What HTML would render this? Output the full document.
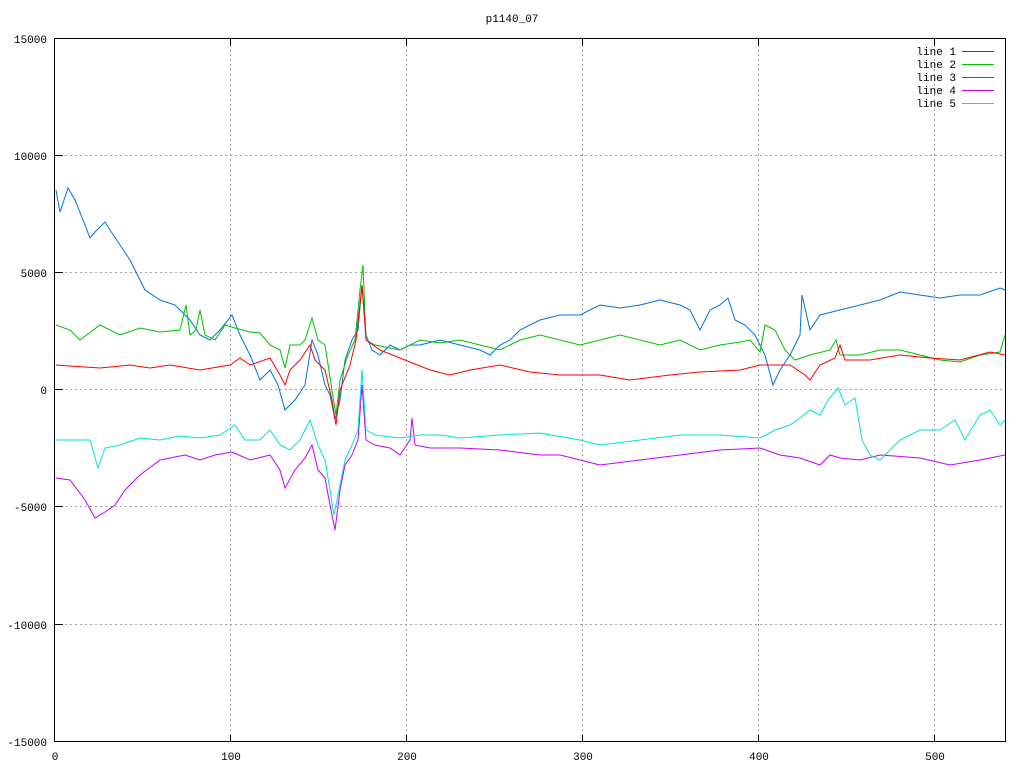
<!DOCTYPE html>
<html><head><meta charset="utf-8"><style>html,body{margin:0;padding:0;background:#fff}svg{display:block}</style></head><body>
<svg width="1024" height="768" xmlns="http://www.w3.org/2000/svg" font-family="Liberation Mono, monospace" font-size="11">
<rect width="1024" height="768" fill="#fff"/>
<g stroke="#a0a0a0" stroke-dasharray="2,3" stroke-width="1">
<line x1="55" y1="155.5" x2="1006" y2="155.5"/><line x1="55" y1="272.5" x2="1006" y2="272.5"/><line x1="55" y1="389.5" x2="1006" y2="389.5"/><line x1="55" y1="506.5" x2="1006" y2="506.5"/><line x1="55" y1="624.5" x2="1006" y2="624.5"/>
<line x1="230.5" y1="39" x2="230.5" y2="742"/><line x1="406.5" y1="39" x2="406.5" y2="742"/><line x1="582.5" y1="39" x2="582.5" y2="742"/><line x1="758.5" y1="39" x2="758.5" y2="742"/><line x1="934.5" y1="39" x2="934.5" y2="742"/>
</g>
<rect x="54.5" y="38.5" width="951" height="703" fill="none" stroke="#000"/>
<g stroke="#000">
<line x1="55" y1="155.5" x2="63" y2="155.5"/><line x1="55" y1="272.5" x2="63" y2="272.5"/><line x1="55" y1="389.5" x2="63" y2="389.5"/><line x1="55" y1="506.5" x2="63" y2="506.5"/><line x1="55" y1="624.5" x2="63" y2="624.5"/>
<line x1="230.5" y1="39" x2="230.5" y2="46"/><line x1="406.5" y1="39" x2="406.5" y2="46"/><line x1="582.5" y1="39" x2="582.5" y2="46"/><line x1="758.5" y1="39" x2="758.5" y2="46"/><line x1="934.5" y1="39" x2="934.5" y2="46"/>
<line x1="230.5" y1="742" x2="230.5" y2="735"/><line x1="406.5" y1="742" x2="406.5" y2="735"/><line x1="582.5" y1="742" x2="582.5" y2="735"/><line x1="758.5" y1="742" x2="758.5" y2="735"/><line x1="934.5" y1="742" x2="934.5" y2="735"/>
</g>
<g fill="#000" text-anchor="end">
<text x="47" y="43">15000</text><text x="47" y="160">10000</text><text x="47" y="277">5000</text><text x="47" y="394">0</text><text x="47" y="511">-5000</text><text x="47" y="629">-10000</text><text x="47" y="746">-15000</text>
</g>
<g fill="#000" text-anchor="middle">
<text x="55" y="760">0</text><text x="231" y="760">100</text><text x="407" y="760">200</text><text x="583" y="760">300</text><text x="759" y="760">400</text><text x="935" y="760">500</text>
<text x="512" y="22">p1140_07</text>
</g>
<g fill="none" stroke-width="1">
<polyline stroke="#0070e0" points="56,190 60,212 68,188 75,200 85,225 90,238 95,232 105,222 110,230 120,245 130,260 145,290 160,300 175,305 190,320 200,335 210,340 220,330 232,315 240,335 250,355 260,380 270,370 278,385 285,410 295,400 305,385 312,340 318,355 325,385 330,395 335,420 340,400 345,360 352,340 358,330 362,285 366,335 372,350 380,355 390,345 400,350 410,345 420,345 440,340 460,345 480,350 490,355 500,345 510,340 520,330 540,320 560,315 580,315 600,305 620,308 640,305 660,300 680,305 690,310 700,330 710,310 720,305 728,298 735,320 745,325 755,335 765,355 773,385 780,370 790,355 800,335 802,295 810,330 820,315 840,310 860,305 880,300 900,292 920,295 940,298 960,295 980,295 1000,288 1005,290"/>
<polyline stroke="#00c000" points="56,325 70,330 80,340 100,325 120,335 140,328 160,332 180,330 186,305 190,335 196,330 200,310 205,335 215,340 225,325 235,328 250,332 260,333 270,345 280,350 285,368 290,345 300,345 305,340 312,318 318,340 325,345 332,390 336,415 340,380 348,355 355,340 360,290 363,265 366,340 375,345 390,348 400,350 420,340 440,343 460,340 480,345 500,350 510,345 520,340 540,335 560,340 580,345 600,340 620,335 640,340 660,345 680,340 700,350 720,345 740,342 750,340 760,352 765,325 775,330 785,350 795,360 810,355 830,350 836,340 840,355 860,355 880,350 900,350 920,355 940,360 960,362 980,355 1000,352 1005,335"/>
<polyline stroke="#ff0000" points="56,365 70,366 100,368 130,365 150,368 170,365 200,370 230,365 240,358 250,365 270,358 280,375 285,385 290,370 300,360 310,345 315,360 325,370 332,400 336,425 340,390 350,365 356,340 362,285 366,340 380,350 400,358 430,370 450,375 470,370 500,365 530,372 560,375 600,375 630,380 670,375 700,372 740,370 760,365 790,365 805,375 810,380 820,365 835,358 840,345 845,360 870,360 900,355 930,358 960,360 990,352 1005,355"/>
<polyline stroke="#c000ff" points="56,478 70,480 85,500 95,518 105,512 115,505 125,490 140,475 160,460 185,455 200,460 215,455 232,452 250,460 270,455 280,470 285,488 295,470 305,458 312,445 318,470 325,478 330,505 335,530 340,490 345,465 352,455 358,440 362,385 366,440 375,445 390,448 400,455 410,440 412,418 415,445 430,448 460,448 500,450 540,455 560,455 580,460 600,465 640,460 680,455 720,450 760,448 780,455 800,458 820,465 830,455 840,458 860,460 880,455 920,458 950,465 980,460 1005,455"/>
<polyline stroke="#00e0e0" points="56,440 70,440 90,440 98,468 105,448 120,445 140,438 160,440 180,436 200,438 220,435 235,425 245,440 260,440 270,430 280,445 290,450 300,440 310,420 318,445 325,460 330,490 334,515 338,495 345,460 352,445 358,430 362,370 366,430 375,435 400,438 420,435 440,435 460,438 500,435 540,433 580,440 600,445 640,440 680,435 720,435 760,438 775,430 790,425 800,418 810,410 820,415 828,400 838,388 845,405 855,398 862,440 870,455 880,460 900,440 920,430 940,430 955,420 965,440 980,415 990,410 1000,425 1005,420"/>
</g>
<g fill="#000" text-anchor="end">
<text x="956" y="55">line 1</text><text x="956" y="68">line 2</text><text x="956" y="81">line 3</text><text x="956" y="94">line 4</text><text x="956" y="107">line 5</text>
</g>
<g stroke-width="1">
<line x1="962" y1="51.5" x2="994" y2="51.5" stroke="#ff0000"/>
<line x1="962" y1="64.5" x2="994" y2="64.5" stroke="#00c000"/>
<line x1="962" y1="77.5" x2="994" y2="77.5" stroke="#0070e0"/>
<line x1="962" y1="90.5" x2="994" y2="90.5" stroke="#c000ff"/>
<line x1="962" y1="103.5" x2="994" y2="103.5" stroke="#00e0e0"/>
</g>
</svg>
</body></html>
